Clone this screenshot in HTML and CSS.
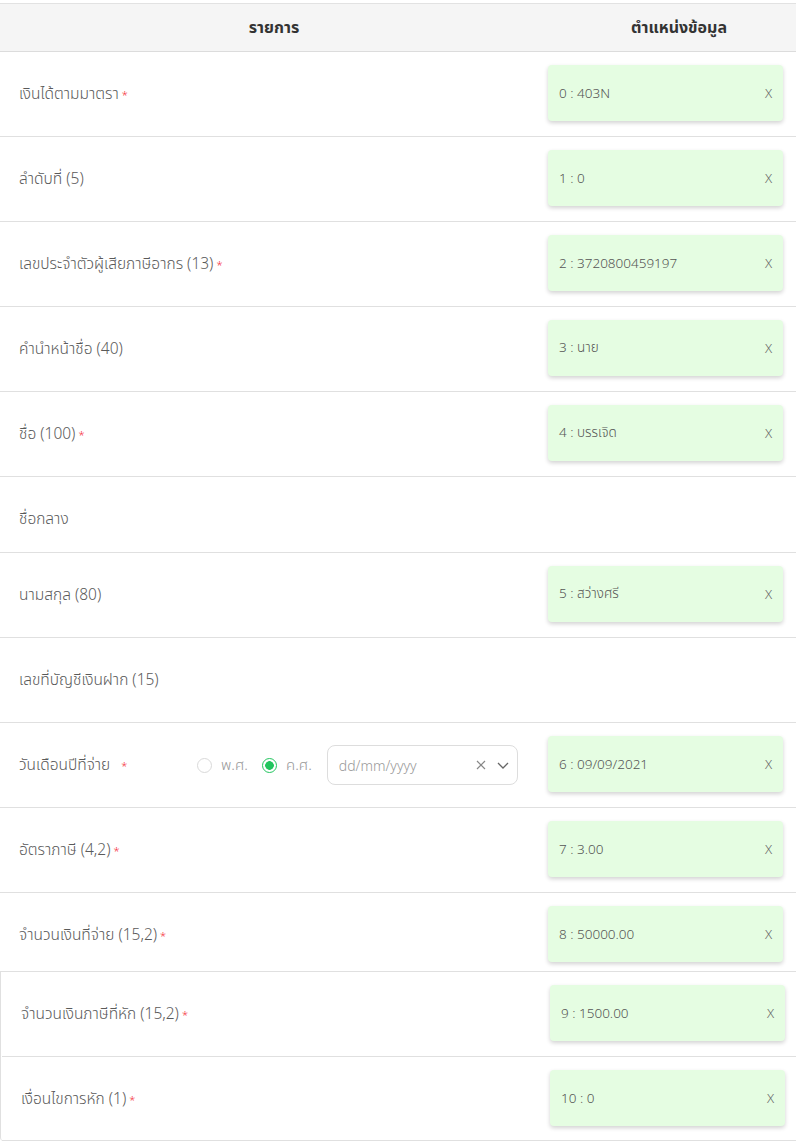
FILE: index.html
```html
<!DOCTYPE html>
<html lang="th">
<head>
    <meta charset="UTF-8">
    <meta name="viewport" content="width=device-width, initial-scale=1.0">
    <title>ตำแหน่งข้อมูล</title>
    <link rel="stylesheet" href="styles.css">
</head>
<body>
    <div class="table">
        <div class="head">
            <div class="head-cell">รายการ</div>
            <div class="head-cell head-right">ตำแหน่งข้อมูล</div>
        </div>

        <div class="row">
            <div class="label">เงินได้ตามมาตรา <span class="req">*</span></div>
            <div class="cell"><div class="chip"><span>0 : 403N</span><span class="x">X</span></div></div>
        </div>
        <div class="row">
            <div class="label">ลำดับที่ (5)</div>
            <div class="cell"><div class="chip"><span>1 : 0</span><span class="x">X</span></div></div>
        </div>
        <div class="row">
            <div class="label">เลขประจำตัวผู้เสียภาษีอากร (13) <span class="req">*</span></div>
            <div class="cell"><div class="chip"><span>2 : 3720800459197</span><span class="x">X</span></div></div>
        </div>
        <div class="row">
            <div class="label">คำนำหน้าชื่อ (40)</div>
            <div class="cell"><div class="chip"><span>3 : นาย</span><span class="x">X</span></div></div>
        </div>
        <div class="row">
            <div class="label">ชื่อ (100) <span class="req">*</span></div>
            <div class="cell"><div class="chip"><span>4 : บรรเจิด</span><span class="x">X</span></div></div>
        </div>
        <div class="row row-short">
            <div class="label">ชื่อกลาง</div>
            <div class="cell"></div>
        </div>
        <div class="row">
            <div class="label">นามสกุล (80)</div>
            <div class="cell"><div class="chip"><span>5 : สว่างศรี</span><span class="x">X</span></div></div>
        </div>
        <div class="row">
            <div class="label">เลขที่บัญชีเงินฝาก (15)</div>
            <div class="cell"></div>
        </div>
        <div class="row">
            <div class="label date-label">
                <span class="date-name">วันเดือนปีที่จ่าย&nbsp;&nbsp;<span class="req">*</span></span>
                <label class="radio"><span class="dot"></span>พ.ศ.</label>
                <label class="radio on"><span class="dot"></span>ค.ศ.</label>
                <div class="date-input">
                    <span class="ph">dd/mm/yyyy</span>
                    <svg class="ico" width="12" height="12" viewBox="0 0 12 12"><path d="M2 2 L10 10 M10 2 L2 10" stroke="#888" stroke-width="1.2" fill="none"/></svg>
                    <svg class="ico" width="14" height="12" viewBox="0 0 14 12"><path d="M2 4 L7 9 L12 4" stroke="#666" stroke-width="1.3" fill="none"/></svg>
                </div>
            </div>
            <div class="cell"><div class="chip"><span>6 : 09/09/2021</span><span class="x">X</span></div></div>
        </div>
        <div class="row">
            <div class="label">อัตราภาษี (4,2) <span class="req">*</span></div>
            <div class="cell"><div class="chip"><span>7 : 3.00</span><span class="x">X</span></div></div>
        </div>
        <div class="row row-mid">
            <div class="label">จำนวนเงินที่จ่าย (15,2) <span class="req">*</span></div>
            <div class="cell"><div class="chip"><span>8 : 50000.00</span><span class="x">X</span></div></div>
        </div>

        <div class="group">
            <div class="row">
                <div class="label">จำนวนเงินภาษีที่หัก (15,2) <span class="req">*</span></div>
                <div class="cell"><div class="chip"><span>9 : 1500.00</span><span class="x">X</span></div></div>
            </div>
            <div class="row">
                <div class="label">เงื่อนไขการหัก (1) <span class="req">*</span></div>
                <div class="cell"><div class="chip"><span>10 : 0</span><span class="x">X</span></div></div>
            </div>
        </div>
    </div>
</body>
</html>
```

FILE: styles.css
```css
body {
    margin: 0;
    padding-top: 3px;
    font-family: "Noto Sans", "Noto Sans Thai", "DejaVu Sans", sans-serif;
    color: #5a5a5a;
    background: #fff;
}
.table {
    width: 796px;
}
.head {
    display: grid;
    grid-template-columns: 548px 248px;
    height: 47px;
    background: #f5f5f5;
    border-top: 1px solid #e2e2e2;
    border-bottom: 1px solid #dcdcdc;
}
.head-cell {
    display: flex;
    align-items: center;
    justify-content: center;
    font-size: 16px;
    font-weight: bold;
    color: #333;
}
.head-right {
    padding-left: 14px;
}
.row {
    display: grid;
    grid-template-columns: 548px 248px;
    height: 85px;
    box-sizing: border-box;
    border-bottom: 1px solid #e0e0e0;
}
.row-short {
    height: 76px;
}
.row-mid {
    height: 78px;
    border-bottom: none;
}
.label {
    display: flex;
    align-items: center;
    height: 85px;
    box-sizing: border-box;
    padding-left: 19px;
    padding-bottom: 1px;
    font-size: 15.5px;
    font-weight: 300;
}
.req {
    color: #f5222d;
    font-size: 11px;
    margin-left: 3px;
}
.cell {
    padding: 13px 13px 0 0;
}
.chip {
    display: flex;
    justify-content: space-between;
    align-items: center;
    height: 56px;
    box-sizing: border-box;
    padding: 0 11px;
    background: #e5fde2;
    border-radius: 4px;
    box-shadow: 0 2px 4px rgba(0, 0, 0, 0.18);
    font-size: 13.5px;
    font-weight: 300;
    color: #555;
}
.x {
    font-size: 13px;
    color: #666;
}
.date-name {
    width: 178px;
}
.radio {
    display: flex;
    align-items: center;
    gap: 9px;
    margin-right: 14px;
    color: #999;
    font-size: 15px;
    font-weight: 300;
}
.dot {
    width: 13px;
    height: 13px;
    border: 1px solid #d9d9d9;
    border-radius: 50%;
    box-sizing: content-box;
}
.radio.on .dot {
    border-color: #22c55e;
    background: radial-gradient(circle, #22c55e 0 4px, #fff 4.6px);
}
.date-input {
    display: flex;
    align-items: center;
    gap: 9px;
    width: 191px;
    height: 40px;
    box-sizing: border-box;
    margin-left: 1px;
    padding: 0 7px 0 11px;
    border: 1px solid #ddd;
    border-radius: 8px;
}
.ph {
    flex: 1;
    color: #999;
    font-size: 14px;
    font-weight: 300;
}
.group {
    border-top: 1px solid #e0e0e0;
    border-left: 1px solid #e0e0e0;
    border-bottom-left-radius: 4px;
    padding-left: 1px;
}
.group .row:last-child {
    height: 84px;
}
```
